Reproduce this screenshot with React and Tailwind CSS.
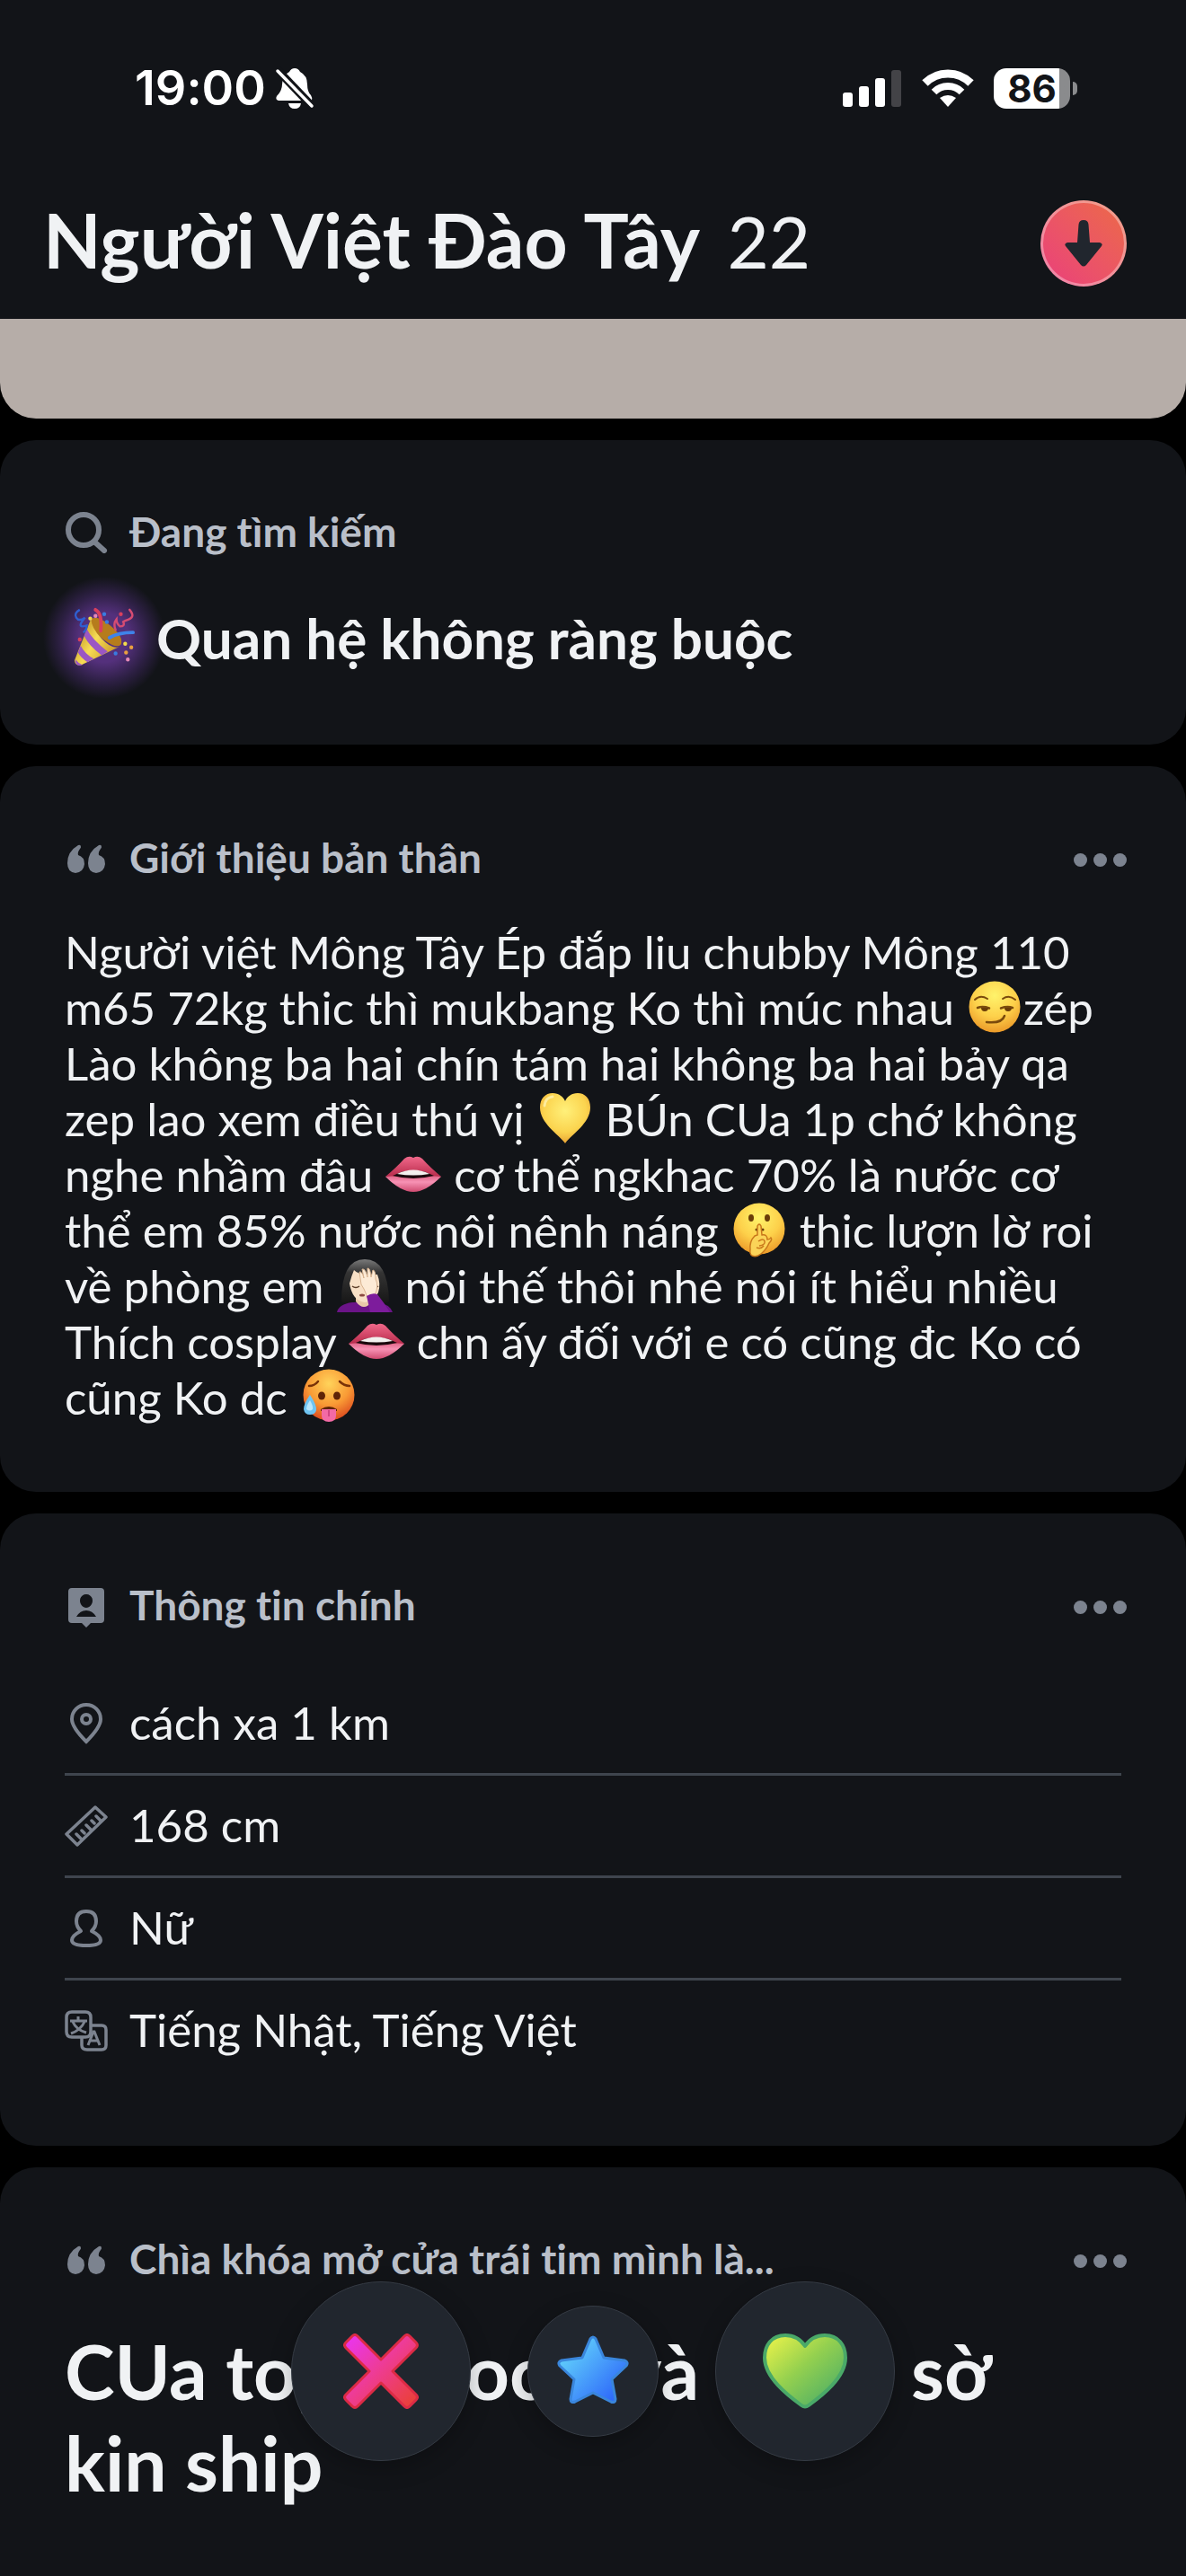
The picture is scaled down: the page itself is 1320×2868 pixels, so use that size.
import React from 'react'

const BIO = [
    ['Người việt Mông Tây Ép đắp liu chubby Mông 110'],
    ['m65 72kg thic thì mukbang Ko thì múc nhau ', 'smirk', 'zép'],
    ['Lào không ba hai chín tám hai không ba hai bảy qa'],
    ['zep lao xem điều thú vị ', 'heart', ' BÚn CUa 1p chớ không'],
    ['nghe nhầm đâu ', 'lips', ' cơ thể ngkhac 70% là nước cơ'],
    ['thể em 85% nước nôi nênh náng ', 'shush', ' thic lượn lờ roi'],
    ['về phòng em ', 'facepalm', ' nói thế thôi nhé nói ít hiểu nhiều'],
    ['Thích cosplay ', 'lips', ' chn ấy đối với e có cũng đc Ko có'],
    ['cũng Ko dc ', 'hot'],
]

const FaceFill = ({ id, hot }) => (
    <defs>
        <radialGradient id={id} cx="0.5" cy="0.28" r="0.75">
            <stop offset="0" stopColor={hot ? '#ffd35a' : '#fff36b'} />
            <stop offset="0.55" stopColor={hot ? '#f99a35' : '#fdd04a'} />
            <stop offset="1" stopColor={hot ? '#d9431c' : '#ea9526'} />
        </radialGradient>
    </defs>
)

const EMOJI = {
    smirk: (
        <>
            <FaceFill id="smirkFace" />
            <circle cx="32" cy="32" r="28.5" fill="url(#smirkFace)" />
            <g fill="none" stroke="#7a4a0c" strokeLinecap="round">
                <path d="M10 24Q16 18 24 23" strokeWidth="2" />
                <path d="M41 23Q48 18 55 24" strokeWidth="2" />
                <path d="M13 33Q19 31 26 33.5" strokeWidth="2.5" />
                <path d="M39 33.5Q46 31 52 33" strokeWidth="2.5" />
                <path d="M23 49Q40 51 43 42" strokeWidth="2.5" />
            </g>
            <path d="M17 33h8q0 4-4 4t-4-4zM43 33h8q0 4-4 4t-4-4z" fill="#6a3c08" />
        </>
    ),
    heart: (
        <>
            <defs>
                <radialGradient id="yellowHeart" cx="0.5" cy="0.35" r="0.7">
                    <stop offset="0" stopColor="#fff07a" />
                    <stop offset="0.6" stopColor="#fbd44f" />
                    <stop offset="1" stopColor="#e79a2e" />
                </radialGradient>
            </defs>
            <path d="M32 60C26 51 4 38 4 20C4 10 10 4 18 4C25 4 30 8 32 13C34 8 39 4 46 4C54 4 60 10 60 20C60 38 38 51 32 60Z" fill="url(#yellowHeart)" />
            <path d="M9 18Q10 9 18 8" stroke="#fff7bd" strokeWidth="3" strokeLinecap="round" fill="none" opacity="0.7" />
        </>
    ),
    lips: (
        <>
            <defs>
                <linearGradient id="upperLip" x1="0" y1="0" x2="0" y2="1">
                    <stop offset="0" stopColor="#f0688a" />
                    <stop offset="1" stopColor="#b92c4c" />
                </linearGradient>
                <linearGradient id="lowerLip" x1="0" y1="0" x2="0" y2="1">
                    <stop offset="0" stopColor="#d2486c" />
                    <stop offset="0.5" stopColor="#f792b4" />
                    <stop offset="1" stopColor="#cf4a70" />
                </linearGradient>
            </defs>
            <path d="M1 35Q32 25 63 35Q46 52 32 52Q18 52 1 35Z" fill="url(#lowerLip)" />
            <path d="M1 35Q14 24 22 15Q27 11 32 14Q37 11 42 15Q50 24 63 35Q50 34 32 34Q14 34 1 35Z" fill="url(#upperLip)" />
            <path d="M9 34Q32 22 55 34Q32 40 9 34Z" fill="#1a080c" />
            <path d="M14 32Q32 23 50 32Q32 35 14 32Z" fill="#f2f0ee" />
        </>
    ),
    shush: (
        <>
            <FaceFill id="shushFace" />
            <circle cx="32" cy="31" r="28.5" fill="url(#shushFace)" />
            <g fill="#6a3c08">
                <ellipse cx="23" cy="19" rx="3" ry="4" />
                <ellipse cx="41" cy="19" rx="3" ry="4" />
                <circle cx="29" cy="32" r="1.5" />
                <circle cx="36" cy="32" r="1.5" />
            </g>
            <path d="M30 28Q32 24 34 28L35 38Q41 37 41 43Q44 43 45 41Q47 43 43 47Q40 54 34 59Q29 63 24 61Q21 59 22 54Q21 45 27 39L30 38Z" fill="#fbd458" stroke="#c9781b" strokeWidth="1.5" />
            <path d="M31 45Q37 41 38 45T32 50M29 52Q34 54 37 50" fill="none" stroke="#c9781b" strokeWidth="1.5" />
        </>
    ),
    facepalm: (
        <>
            <defs>
                <linearGradient id="darkHair" x1="0" y1="0" x2="0" y2="1">
                    <stop offset="0" stopColor="#7a7a7a" />
                    <stop offset="0.3" stopColor="#343434" />
                    <stop offset="1" stopColor="#161616" />
                </linearGradient>
            </defs>
            <path d="M6 50Q6 3 32 3Q58 3 59 50Q54 53 44 52H20Q10 53 6 50Z" fill="url(#darkHair)" />
            <path d="M1 62Q3 53 18 51H46Q60 53 63 62Z" fill="#6b1488" />
            <path d="M22 50Q31 62 40 50V44H22Z" fill="#e9c9a9" />
            <path d="M15 30Q17 22 20 15Q26 22 46 20Q50 30 47 40Q42 51 32 51Q18 49 15 30Z" fill="#f8e0c6" />
            <path d="M18 33Q22 36 26 33M40 34Q43 36 47 33" stroke="#5b3d28" strokeWidth="1.5" fill="none" />
            <ellipse cx="29" cy="43" rx="3" ry="1.5" fill="#8b4a40" />
            <path d="M26 17Q29 16 31 24L29 14Q33 13 35 23L35 13Q38 12 39 23L41 15Q44 15 44 25Q48 33 43 43L35 46Q33 40 31 36L28 31Z" fill="#fdebd6" stroke="#d9b491" strokeWidth="1" />
            <path d="M34 44Q40 40 46 42Q54 52 60 62H38Q36 52 34 44Z" fill="#7d1c9c" />
        </>
    ),
    hot: (
        <>
            <FaceFill id="hotFace" hot />
            <circle cx="33" cy="30" r="28.5" fill="url(#hotFace)" />
            <g fill="#5f2407">
                <ellipse cx="25" cy="31" rx="4" ry="4.5" />
                <ellipse cx="42" cy="31" rx="4" ry="4.5" />
                <path d="M24 46Q33 40 42 46V48H24Z" />
            </g>
            <path d="M11 20Q17 20 21 15M45 15Q50 20 56 20" stroke="#7a3208" strokeWidth="2.5" fill="none" strokeLinecap="round" />
            <path d="M25 46H41V53Q41 60 33 60T25 53Z" fill="#f36aa5" />
            <path d="M33 47V54" stroke="#c93a78" strokeWidth="1.5" />
            <path d="M12 30Q20 42 19 47Q18 52 12 52T5 46Q5 40 12 30Z" fill="#6fc4f2" />
            <path d="M12 36Q16 43 15 46Q12 49 8 46Q8 42 12 36Z" fill="#b9e6fb" />
        </>
    ),
}

const Emoji = ({ name }) => (
    <svg viewBox="0 0 64 64" className="inline-block size-16 -my-3 align-baseline" role="img">
        {EMOJI[name]}
    </svg>
)

const SearchIcon = () => (
    <svg viewBox="0 0 48 48" className="size-12 shrink-0" fill="none" stroke="#7c838f">
        <circle cx="21" cy="22" r="17" strokeWidth="6" />
        <path d="M34 36L44 45" strokeWidth="6" strokeLinecap="round" />
    </svg>
)

const QuoteIcon = () => (
    <svg viewBox="0 0 48 48" className="size-12 shrink-0" fill="#7c838f">
        <path d="M15 10Q18 9 18 12Q18 13 17 14Q14 18 15 21Q22 23 22 31Q21 40 12 41Q3 40 3 30Q3 17 15 10Z" />
        <path d="M38 10Q41 9 41 12Q41 13 40 14Q37 18 38 21Q45 23 45 31Q44 40 35 41Q26 40 26 30Q26 17 38 10Z" />
    </svg>
)

const BadgeIcon = () => (
    <svg viewBox="0 0 48 48" className="size-12 shrink-0 overflow-visible" fill="#7c838f">
        <path fillRule="evenodd" d="M8 5H40Q44 5 44 9V40Q44 44 40 44H29L24 49L19 44H8Q4 44 4 40V9Q4 5 8 5ZM24 12C20 12 17 15 17 19S20 27 24 27S31 23 31 19S28 12 24 12ZM13 37H35Q31 30 24 30T13 37Z" />
    </svg>
)

const PinIcon = () => (
    <svg viewBox="0 0 48 48" className="size-12 shrink-0" fill="none" stroke="#7c838f" strokeWidth="4">
        <path d="M24 44Q8 28 8 19A16 16 0 0 1 40 19Q40 28 24 44Z" />
        <circle cx="24" cy="19" r="5" />
    </svg>
)

const RulerIcon = () => (
    <svg viewBox="0 0 48 48" className="size-12 shrink-0" fill="none" stroke="#7c838f" strokeWidth="3.5">
        <path d="M34 3L46 14L14 45L2 33Z" strokeLinejoin="round" />
        <path d="M13 33L18 38M19 29L22 32M24 23L29 28M30 18L33 21M35 13L40 18" strokeLinecap="round" />
    </svg>
)

const PersonIcon = () => (
    <svg viewBox="0 0 48 48" className="size-12 shrink-0" fill="none" stroke="#7c838f" strokeWidth="4">
        <path d="M18 27Q13 22 13 16Q13 5 24 5T35 16Q35 22 30 27Q40 32 40 37Q40 43 24 43T8 37Q8 32 18 27Z" strokeLinejoin="round" />
    </svg>
)

const LanguageIcon = () => (
    <svg viewBox="0 0 48 48" className="size-12 shrink-0" fill="none" stroke="#7c838f" strokeWidth="3.5">
        <path d="M19 31H8Q2 31 2 25V9Q2 3 8 3H23Q29 3 29 9V25Q29 31 23 31H19V40Q19 45 25 45H41Q46 45 46 40V23Q46 18 41 18H29" />
        <path d="M6 13H25M15 8V13M9 14Q13 23 24 26M22 14Q18 23 7 27" strokeWidth="3" />
        <path d="M26 40L32 25H33L39 40M28 35H37" strokeWidth="3" />
    </svg>
)

const BellOff = () => (
    <svg viewBox="0 0 44 48" className="h-12 w-11" fill="#fff">
        <path d="M22 2Q26 2 28 6Q36 10 36 20Q36 28 40 32Q42 35 41 38H4Q0 37 2 33Q8 27 8 20Q8 10 16 6Q18 2 22 2Z" />
        <path d="M15 41H29Q28 47 22 47T15 41Z" />
        <path d="M1 2L43 46" stroke="#121418" strokeWidth="9" />
        <path d="M3 5L41 44" stroke="#fff" strokeWidth="3.5" strokeLinecap="round" />
    </svg>
)

const Signal = () => (
    <svg viewBox="0 0 66 42" className="h-[42px] w-[66px]" fill="#fff">
        <rect x="0" y="26" width="11" height="16" rx="3" />
        <rect x="18" y="19" width="11" height="23" rx="3" />
        <rect x="36" y="10" width="11" height="32" rx="3" />
        <rect x="54" y="1" width="11" height="41" rx="3" fill="#434347" />
    </svg>
)

const Wifi = () => (
    <svg viewBox="0 0 58 42" className="h-[42px] w-[58px]" fill="none" stroke="#fff">
        <path d="M3.5 15.5A36 36 0 0 1 54.5 15.5" strokeWidth="9" />
        <path d="M13.5 25.5A22 22 0 0 1 44.5 25.5" strokeWidth="8" />
        <path d="M20 32Q29 26 38 32L29 42Z" fill="#fff" stroke="none" />
    </svg>
)

const Battery = () => (
    <div className="flex items-center gap-[3px]">
        <div className="flex h-[45px] w-[85px] items-center justify-center rounded-[14px] bg-linear-to-r from-white from-86% to-[#8a8b8d] to-86%">
            <span className="font-[Inter] text-[42px] leading-[45px] font-bold text-[#121418]">86</span>
        </div>
        <div className="h-[15px] w-[5px] rounded-r-full bg-[#8a8b8d]" />
    </div>
)

const PartyIcon = () => (
    <svg viewBox="0 0 72 72" className="size-[70px]" fill="none">
        <defs>
            <linearGradient id="cone" x1="0" y1="0.2" x2="1" y2="0.8">
                <stop offset="0" stopColor="#b8871c" />
                <stop offset="0.45" stopColor="#f7dc55" />
                <stop offset="1" stopColor="#c08a1e" />
            </linearGradient>
        </defs>
        <path d="M21 15Q27 9 43 22T55 44Q50 49 35 38T21 15Z" fill="#b67c1c" />
        <path d="M21 14L2 62Q3 69 10 67L54 46Q45 50 33 37Q21 25 21 14Z" fill="url(#cone)" />
        <path d="M16 26Q22 38 40 52L33 56Q19 46 13 34ZM9 45Q14 55 24 60L17 64Q9 59 6 53ZM3 61Q6 65 11 67Q3 70 3 61Z" fill="#9b57c4" />
        <path d="M26 4Q34 8 32 28" stroke="#d9405c" strokeWidth="4" strokeLinecap="round" />
        <path d="M42 36Q52 30 69 30" stroke="#3f83ea" strokeWidth="4" strokeLinecap="round" />
        <path d="M8 4Q1 8 4 13T14 13Q8 20 9 22T16 22Q16 27 12 30" stroke="#2f5fd0" strokeWidth="2.5" />
        <path d="M65 4Q72 12 64 15T58 18Q60 23 54 23Q50 20 50 15Q46 20 49 27" stroke="#d64c72" strokeWidth="2.5" strokeLinecap="round" />
        <path d="M20 14h0M60 43h0" stroke="#f3dc4c" strokeWidth="4.5" strokeLinecap="round" />
        <path d="M36 9h0M39 18h0M49 54h0" stroke="#3a7be0" strokeWidth="4.5" strokeLinecap="round" />
        <path d="M26 11h0M63 61h0" stroke="#e68ab8" strokeWidth="4.5" strokeLinecap="round" />
        <path d="M55 9h0M8 38h0" stroke="#d9405c" strokeWidth="4.5" strokeLinecap="round" />
        <path d="M67 47h0M61 53h0" stroke="#e9a040" strokeWidth="4.5" strokeLinecap="round" />
    </svg>
)

const MoreButton = () => (
    <button aria-label="Thêm" className="ml-auto flex gap-[7px] pt-1">
        <span className="size-[15px] rounded-full bg-[#7c838f]" />
        <span className="size-[15px] rounded-full bg-[#7c838f]" />
        <span className="size-[15px] rounded-full bg-[#7c838f]" />
    </button>
)

const CardHeader = ({ icon, title, more }) => (
    <div className="flex h-12 items-center gap-6 pr-[66px] pl-[72px]">
        {icon}
        <h2 className="text-[46px] leading-[48px] font-bold text-[#b9bfc9]">{title}</h2>
        {more && <MoreButton />}
    </div>
)

const INFO = [
    { icon: <PinIcon />, text: 'cách xa 1 km' },
    { icon: <RulerIcon />, text: '168 cm' },
    { icon: <PersonIcon />, text: 'Nữ' },
    { icon: <LanguageIcon />, text: 'Tiếng Nhật, Tiếng Việt' },
]

const App = () => {
    return (
        <div className="relative flex min-h-screen flex-col gap-6 bg-black font-[Lato,sans-serif] text-[#f0f2f4] [font-variant-ligatures:none]">
            <div>
                <header className="bg-[#121418] pt-[74px] pb-9">
                    {/* Status bar */}
                    <div className="flex h-12 items-center pr-[121px] pl-[150px]">
                        <span className="font-[Inter] text-[54px] leading-[48px] font-semibold text-white">19:00</span>
                        <span className="ml-[10px]"><BellOff /></span>
                        <div className="ml-auto flex items-center gap-[22px]">
                            <Signal />
                            <Wifi />
                            <Battery />
                        </div>
                    </div>

                    {/* Name and close button */}
                    <div className="mt-[101px] flex h-24 items-center justify-between pr-[66px] pl-12">
                        <h1 className="pb-2 text-[84px] leading-[88px] font-bold">
                            Người Việt Đào Tây <span className="ml-3 text-[80px] font-normal">22</span>
                        </h1>
                        <button aria-label="Đóng" className="flex size-24 items-center justify-center rounded-full border-3 border-white/35 bg-linear-to-tr from-[#ea3d7b] to-[#ec6a44] bg-origin-border">
                            <svg viewBox="0 0 44 52" className="h-[52px] w-11" fill="#21262e">
                                <path d="M22 0Q27 0 27.5 5L29 25H40Q44 26 42 29L25 50Q22 53 19 50L2 29Q0 26 4 25H15L16.5 5Q17 0 22 0Z" />
                            </svg>
                        </button>
                    </div>
                </header>
                <div className="h-[111px] rounded-b-[40px] bg-[#b6ada8]" />
            </div>

            {/* Looking for */}
            <section className="rounded-[40px] bg-[#121418] pt-[78px] pb-[83px]">
                <CardHeader icon={<SearchIcon />} title="Đang tìm kiếm" />
                <div className="mt-[58px] flex h-[72px] items-center gap-[22px] pl-20">
                    <div className="-m-8 flex size-[136px] shrink-0 items-center justify-center bg-[radial-gradient(closest-side,#54307c_40%,#2e2045_72%,#121418)]">
                        <PartyIcon />
                    </div>
                    <p className="text-[62px] leading-[72px] font-bold">Quan hệ không ràng buộc</p>
                </div>
            </section>

            {/* About me */}
            <section className="rounded-[40px] bg-[#121418] pt-[78px] pb-[74px]">
                <CardHeader icon={<QuoteIcon />} title="Giới thiệu bản thân" more />
                <p className="mt-[50px] px-[72px] text-[51px] leading-[62px] whitespace-nowrap">
                    {BIO.map((line, i) => (
                        <span key={i} className="block">
                            {line.map((part, j) => (EMOJI[part] ? <Emoji key={j} name={part} /> : part))}
                        </span>
                    ))}
                </p>
            </section>

            {/* Basics */}
            <section className="rounded-[40px] bg-[#121418] pt-[78px] pb-[70px]">
                <CardHeader icon={<BadgeIcon />} title="Thông tin chính" more />
                <ul className="mx-[72px] mt-[52px]">
                    {INFO.map((item) => (
                        <li key={item.text} className="flex h-[114px] items-center gap-6 border-b-3 border-[#3f454e] text-[51px] last:border-transparent">
                            {item.icon}
                            {item.text}
                        </li>
                    ))}
                </ul>
            </section>

            {/* Prompt */}
            <section className="rounded-t-[40px] bg-[#121418] pt-[78px] pb-[75px]">
                <CardHeader icon={<QuoteIcon />} title="Chìa khóa mở cửa trái tim mình là..." more />
                <p className="mt-[50px] px-[72px] text-[84px] leading-[102px] font-bold whitespace-nowrap">
                    CUa topokbocki và nước sờ
                    <br />
                    kin ship
                </p>
            </section>

            {/* Swipe actions */}
            <div className="absolute inset-x-0 bottom-32 flex items-center justify-center gap-[63px]">
                <button aria-label="Bỏ qua" className="flex size-[200px] items-center justify-center rounded-full border border-[#353b44] bg-[#21262e] shadow-[0_8px_24px_rgba(0,0,0,0.25)]">
                    <svg viewBox="0 0 84 84" className="size-[84px]">
                        <defs>
                            <linearGradient id="nope" x1="0" y1="0" x2="1" y2="1">
                                <stop offset="0.05" stopColor="#ea35ee" />
                                <stop offset="0.5" stopColor="#ee3c8e" />
                                <stop offset="0.95" stopColor="#ea4037" />
                            </linearGradient>
                        </defs>
                        <path d="M10 3Q13 0 16 3L42 29L68 3Q71 0 74 3L81 10Q84 13 81 16L55 42L81 68Q84 71 81 74L74 81Q71 84 68 81L42 55L16 81Q13 84 10 81L3 74Q0 71 3 68L29 42L3 16Q0 13 3 10Z" fill="url(#nope)" stroke="#dc2b45" strokeWidth="3" strokeLinejoin="round" />
                    </svg>
                </button>
                <button aria-label="Siêu thích" className="flex size-[146px] items-center justify-center rounded-full border border-[#353b44] bg-[#21262e] shadow-[0_8px_24px_rgba(0,0,0,0.25)]">
                    <svg viewBox="0 0 80 76" className="mb-1 h-[76px] w-20">
                        <defs>
                            <linearGradient id="super" x1="0" y1="0.2" x2="0.9" y2="1">
                                <stop offset="0.05" stopColor="#62d2fb" />
                                <stop offset="0.9" stopColor="#2f6bfa" />
                            </linearGradient>
                        </defs>
                        <path d="M37 4Q40 0 43 4L52 25L75 28Q80 30 77 34L61 49L65 71Q65 76 60 74L40 64L20 74Q15 76 15 71L19 49L3 34Q0 30 5 28L28 25Z" fill="url(#super)" stroke="#3a86dc" strokeWidth="3" strokeLinejoin="round" />
                    </svg>
                </button>
                <button aria-label="Thích" className="flex size-[200px] items-center justify-center rounded-full border border-[#353b44] bg-[#21262e] shadow-[0_8px_24px_rgba(0,0,0,0.25)]">
                    <svg viewBox="0 0 94 84" className="h-[84px] w-[94px]">
                        <defs>
                            <linearGradient id="like" x1="0" y1="0.1" x2="0.8" y2="0.9">
                                <stop offset="0.02" stopColor="#e3f04a" />
                                <stop offset="0.5" stopColor="#94d04f" />
                                <stop offset="1" stopColor="#55b263" />
                            </linearGradient>
                        </defs>
                        <path d="M47 14Q39 2 25 2C10 2 2 13 2 27C2 49 28 69 43 80Q47 83 51 80C66 69 92 49 92 27C92 13 84 2 69 2Q55 2 47 14Z" fill="url(#like)" stroke="#4aa968" strokeWidth="4" strokeLinejoin="round" />
                    </svg>
                </button>
            </div>
        </div>
    )
}

export default App
